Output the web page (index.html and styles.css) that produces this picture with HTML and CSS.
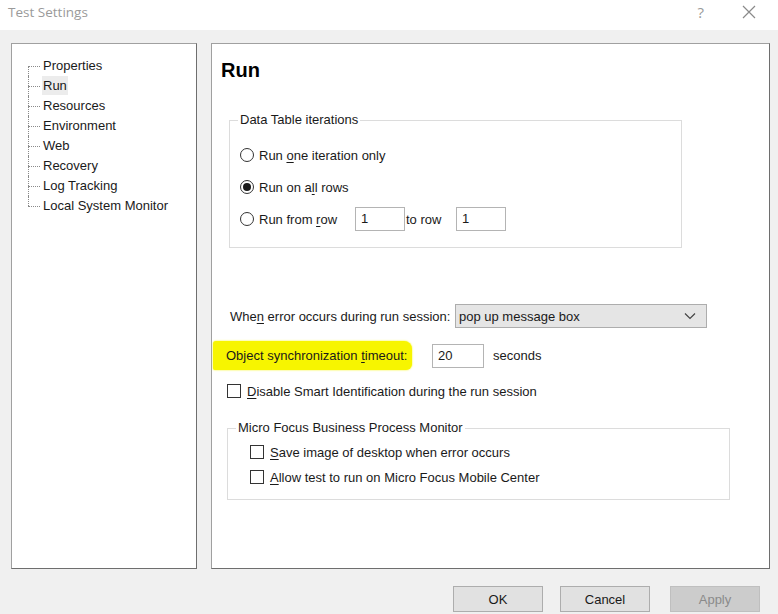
FILE: index.html
```html
<!DOCTYPE html>
<html>
<head>
<meta charset="utf-8">
<link rel="stylesheet" href="styles.css">
</head>
<body>
<div class="window">
  <div class="titlebar">
    <span class="title">Test Settings</span>
    <span class="tb-btns"><span class="help">?</span>
      <svg class="close" width="14" height="14" viewBox="0 0 14 14"><path d="M1 1L13 13M13 1L1 13" stroke="#8a8a8a" stroke-width="1.2" fill="none"/></svg>
    </span>
  </div>
  <div class="body">
    <div class="panels">
      <div class="tree">
        <ul class="tree-list">
          <li><span>Properties</span></li>
          <li><span class="sel">Run</span></li>
          <li><span>Resources</span></li>
          <li><span>Environment</span></li>
          <li><span>Web</span></li>
          <li><span>Recovery</span></li>
          <li><span>Log Tracking</span></li>
          <li class="last"><span>Local System Monitor</span></li>
        </ul>
      </div>
      <div class="content">
        <h1 class="heading">Run</h1>
        <fieldset class="group g1">
          <legend>Data Table iterations</legend>
          <div class="row r1"><span class="radio"></span><span>Run <u>o</u>ne iteration only</span></div>
          <div class="row r2"><span class="radio on"></span><span>Run on a<u>l</u>l rows</span></div>
          <div class="row r3"><span class="radio"></span><span class="from">Run from <u>r</u>ow</span><span class="input w50">1</span><span class="torow">to row</span><span class="input w50">1</span></div>
        </fieldset>
        <div class="row err"><span class="err-label">Whe<u>n</u> error occurs during run session:</span><span class="select">pop up message box<svg width="12" height="8" viewBox="0 0 12 8"><path d="M1 1.5L6 6.5L11 1.5" stroke="#444" stroke-width="1.2" fill="none"/></svg></span></div>
        <div class="row sync"><span class="hl">Object synchronization <u>t</u>imeout:</span><span class="input w52">20</span><span class="sec">seconds</span></div>
        <div class="row smart"><span class="check"></span><span><u>D</u>isable Smart Identification during the run session</span></div>
        <fieldset class="group g2">
          <legend>Micro Focus Business Process Monitor</legend>
          <div class="row c1"><span class="check"></span><span><u>S</u>ave image of desktop when error occurs</span></div>
          <div class="row c2"><span class="check"></span><span><u>A</u>llow test to run on Micro Focus Mobile Center</span></div>
        </fieldset>
      </div>
    </div>
    <div class="footer">
      <button class="btn ok">OK</button>
      <button class="btn cancel">Cancel</button>
      <button class="btn apply" disabled>Apply</button>
    </div>
  </div>
</div>
</body>
</html>
```
FILE: styles.css
```css
* { box-sizing: border-box; }
html, body { margin: 0; padding: 0; }
body {
  width: 778px; height: 614px; overflow: hidden;
  font-family: "Liberation Sans", Arial, sans-serif;
  font-size: 13px; color: #1a1a1a; background: #f0f0f0;
}
.window { width: 778px; height: 614px; display: flex; flex-direction: column; }
.titlebar {
  height: 30px; background: #fff; display: flex; align-items: center;
  justify-content: space-between; padding: 0 22px 6px 8px;
}
.title { font-family: "Open Sans", sans-serif; font-size: 13.5px; color: #9a9a9a; }
.tb-btns { display: flex; align-items: center; gap: 38px; }
.help { font-family: "Open Sans", sans-serif; font-size: 15px; color: #9a9a9a; }
.body { flex: 1; padding: 13px 8px 0 11px; display: flex; flex-direction: column; }
.panels { display: flex; gap: 14px; height: 526px; }
.tree {
  width: 186px; background: #fff;
  border: 1px solid #a0a0a0; border-right-color: #6e6e6e; border-bottom-color: #6e6e6e;
  padding: 12px 0 0 16px;
}
.tree-list { list-style: none; margin: 0; padding: 0; }
.tree-list li {
  height: 20px; line-height: 20px; position: relative; padding-left: 13px;
  border-left: 1px dotted #8a8a8a;
}
.tree-list li::before {
  content: ""; position: absolute; left: -1px; top: 10px; width: 12px;
  border-top: 1px dotted #8a8a8a;
}
.tree-list li:first-child, .tree-list li.last { border-left-color: transparent; }
.tree-list li.last::after {
  content: ""; position: absolute; left: -1px; top: 0; height: 10px;
  border-left: 1px dotted #8a8a8a;
}
.tree-list li:first-child::after {
  content: ""; position: absolute; left: -1px; top: 10px; height: 10px;
  border-left: 1px dotted #8a8a8a;
}
.tree-list span { padding: 2px 1px; }
.tree-list span.sel { background: #ececec; }
.content {
  width: 559px; background: #fff;
  border: 1px solid #a0a0a0; border-right-color: #6e6e6e; border-bottom-color: #6e6e6e;
  padding: 14px 0 0 9px;
}
.heading { margin: 0; font-size: 20px; line-height: 24px; font-weight: bold; color: #000; }
.group {
  margin: 30px 0 0 8px; padding: 0 0 0 10px; border: 1px solid #dcdcdc;
}
.group legend { padding: 0 2px; line-height: 16px; margin-left: -2px; }
.g1 { width: 453px; height: 136px; }
.row { display: flex; align-items: center; }
.radio {
  width: 14px; height: 14px; border: 1px solid #333; border-radius: 50%;
  margin-right: 5px; display: flex; align-items: center; justify-content: center; flex: none;
}
.radio.on::after { content: ""; width: 8px; height: 8px; border-radius: 50%; background: #1a1a1a; }
.r1 { margin-top: 17px; height: 20px; }
.r2 { margin-top: 12px; height: 20px; }
.r3 { margin-top: 10px; height: 24px; }
.from { width: 96px; }
.input {
  height: 24px; border: 1px solid #b4b4b4; background: #fff; line-height: 22px;
  padding-left: 5px; color: #1a1a1a;
}
.w50 { width: 50px; }
.w52 { width: 52px; }
.torow { margin: 0 1px 0 1px; width: 49px; }
.err { margin: 56px 0 0 9px; height: 24px; }
.err-label { width: 225px; }
.select {
  width: 252px; height: 24px; border: 1px solid #adadad; background: #e5e5e5;
  display: flex; align-items: center; justify-content: space-between; padding: 0 10px 0 3px;
}
.sync { margin: 12px 0 0 -8px; height: 31px; }
.hl {
  background: #f7f500; height: 29px; line-height: 29px; padding: 0 3px 0 13px;
  width: 199px; white-space: nowrap; margin-right: 20px;
  border-radius: 3px 8px 6px 2px; box-shadow: 0 0 2px #f7f500;
}
.sec { margin-left: 9px; }
.smart { margin: 8px 0 0 6px; height: 24px; }
.check {
  width: 14px; height: 14px; border: 1px solid #333; margin-right: 6px; flex: none;
}
.g2 { width: 503px; height: 80px; margin-top: 17px; margin-left: 6px; padding-left: 22px; }
.g2 legend { margin-left: -14px; }
.c1 { margin-top: 6px; height: 20px; }
.c2 { margin-top: 5px; height: 20px; }
.footer { display: flex; justify-content: flex-end; padding: 17px 10px 0 0; }
.btn {
  width: 90px; height: 26px; border: 1px solid #adadad; background: #e1e1e1;
  font-family: "Liberation Sans", Arial, sans-serif; font-size: 13px; color: #1a1a1a; padding: 0;
}
.cancel { margin-left: 17px; }
.apply { margin-left: 20px; background: #cccccc; border-color: #bfbfbf; color: #8a8a8a; }
u { text-decoration: underline; text-underline-offset: 2px; }
```
